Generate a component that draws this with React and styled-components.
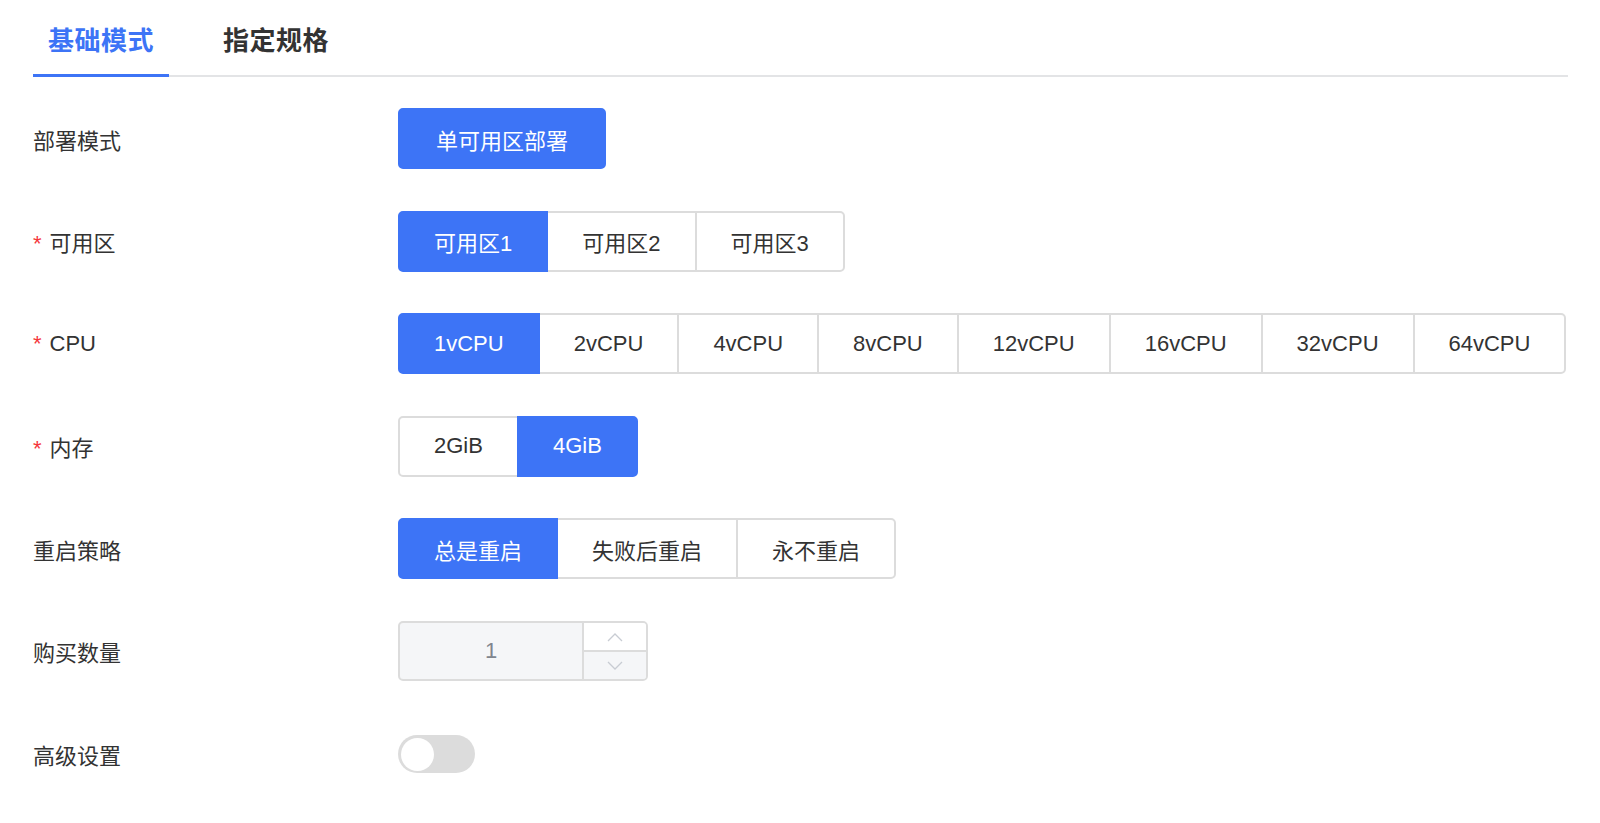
import React, {useState} from 'react';
import styled, {createGlobalStyle} from 'styled-components';

const GlobalStyle = createGlobalStyle`
  body {
    margin: 0;
    background: #fff;
    font-family: "Liberation Sans", "Noto Sans CJK SC", sans-serif;
    color: #333;
  }
`;

const rows = [
    {label: '部署模式', options: ['单可用区部署'], wide: true},
    {label: '可用区', required: true, options: ['可用区1', '可用区2', '可用区3']},
    {label: 'CPU', required: true, options: ['1vCPU', '2vCPU', '4vCPU', '8vCPU', '12vCPU', '16vCPU', '32vCPU', '64vCPU']},
    {label: '内存', required: true, options: ['2GiB', '4GiB'], initial: 1},
    {label: '重启策略', options: ['总是重启', '失败后重启', '永不重启']},
];

const Chevron = ({up}) => (
    <svg width="16" height="10" viewBox="0 0 16 10" fill="none">
        <path d={up ? 'M1 9 L8 2 L15 9' : 'M1 1 L8 8 L15 1'} stroke="#c8ccd3" strokeWidth="1.3"/>
    </svg>
)

const OptionGroup = ({options, initial = 0, wide}) => {
    const [active, setActive] = useState(initial)
    return (
        <Group>
            {options.map((o, i) => (
                <Option key={o} $active={i === active} $wide={wide} onClick={() => setActive(i)}>
                    {o}
                </Option>
            ))}
        </Group>
    )
}

const App = () => {
    const [tab, setTab] = useState(0)
    const [on, setOn] = useState(false)

    return (
        <Page>
            <GlobalStyle/>
            <Tabs>
                {['基础模式', '指定规格'].map((t, i) => (
                    <Tab key={t} $active={tab === i} onClick={() => setTab(i)}>{t}</Tab>
                ))}
            </Tabs>
            <Form>
                {rows.map(r => (
                    <Row key={r.label}>
                        <Label>
                            {r.required && <Star>*</Star>}
                            {r.label}
                        </Label>
                        <OptionGroup options={r.options} initial={r.initial} wide={r.wide}/>
                    </Row>
                ))}
                <Row>
                    <Label>购买数量</Label>
                    <NumberBox>
                        <NumberValue>1</NumberValue>
                        <Steppers>
                            <Step><Chevron up/></Step>
                            <Step $down><Chevron/></Step>
                        </Steppers>
                    </NumberBox>
                </Row>
                <Row>
                    <Label>高级设置</Label>
                    <Switch $on={on} onClick={() => setOn(!on)}>
                        <Knob $on={on}/>
                    </Switch>
                </Row>
            </Form>
        </Page>
    )
}

const Page = styled.div`
  padding: 0 32px 0 33px;
`;

const Tabs = styled.div`
  display: flex;
  gap: 39px;
  height: 77px;
  border-bottom: 2px solid #e3e4e6;
  box-sizing: border-box;
`;

const Tab = styled.div`
  display: flex;
  align-items: center;
  padding: 3px 15px 0;
  margin-bottom: -2px;
  font-size: 26px;
  font-weight: bold;
  letter-spacing: 0.5px;
  color: ${p => p.$active ? '#3d74f6' : '#333'};
  border-bottom: 3px solid ${p => p.$active ? '#3d74f6' : 'transparent'};
  cursor: pointer;
`;

const Form = styled.div`
  display: flex;
  flex-direction: column;
  gap: 41.6px;
  padding-top: 31px;
`;

const Row = styled.div`
  display: flex;
  align-items: center;
  height: 61px;
`;

const Label = styled.div`
  width: 365px;
  flex-shrink: 0;
  font-size: 22px;
  color: #333;
`;

const Star = styled.span`
  color: #f5363c;
  margin-right: 8px;
`;

const Group = styled.div`
  display: flex;
  height: 61px;
`;

const Option = styled.div`
  display: flex;
  align-items: center;
  justify-content: center;
  padding: 0 ${p => p.$wide ? '36px' : '34px'};
  font-size: 22px;
  box-sizing: border-box;
  border: 2px solid ${p => p.$active ? '#3d74f6' : '#dcdcdc'};
  margin-left: -2px;
  background: ${p => p.$active ? '#3d74f6' : '#fff'};
  color: ${p => p.$active ? '#fff' : '#333'};
  cursor: pointer;
  position: relative;
  z-index: ${p => p.$active ? 1 : 0};

  &:first-child {
    margin-left: 0;
    border-radius: 5px 0 0 5px;
  }
  &:last-child {
    border-radius: 0 5px 5px 0;
  }
  &:only-child {
    border-radius: 5px;
  }
`;

const NumberBox = styled.div`
  display: flex;
  width: 250px;
  height: 60px;
  border: 2px solid #dcdcdc;
  border-radius: 5px;
  box-sizing: border-box;
  overflow: hidden;
  background: #f5f6f8;
`;

const NumberValue = styled.div`
  flex: 1;
  display: flex;
  align-items: center;
  justify-content: center;
  font-size: 22px;
  color: #80858e;
`;

const Steppers = styled.div`
  width: 62px;
  display: flex;
  flex-direction: column;
  border-left: 2px solid #dcdcdc;
`;

const Step = styled.div`
  flex: 1;
  display: flex;
  align-items: center;
  justify-content: center;
  background: ${p => p.$down ? '#f5f6f8' : '#fff'};
  border-top: ${p => p.$down ? '2px solid #dcdcdc' : 'none'};
`;

const Switch = styled.div`
  width: 77px;
  height: 38px;
  border-radius: 19px;
  background: ${p => p.$on ? '#3d74f6' : '#dcdcdc'};
  display: flex;
  align-items: center;
  padding: 0 3px;
  box-sizing: border-box;
  justify-content: ${p => p.$on ? 'flex-end' : 'flex-start'};
  cursor: pointer;
`;

const Knob = styled.div`
  width: 33px;
  height: 33px;
  border-radius: 50%;
  background: #fff;
`;

export default App;
